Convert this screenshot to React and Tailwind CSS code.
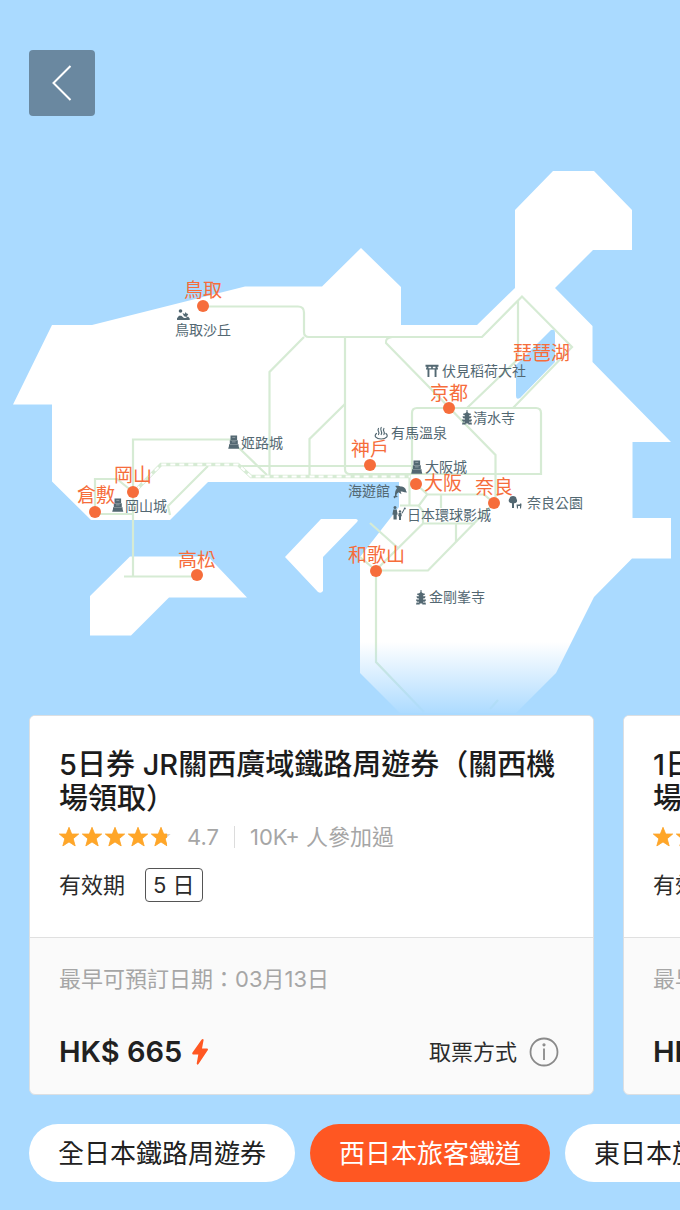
import React, { useState } from 'react'

const cities = [
    { name: '鳥取', x: 184, y: 297, dot: [203, 306] },
    { name: '琵琶湖', x: 513, y: 360 },
    { name: '京都', x: 430, y: 400, dot: [449, 408] },
    { name: '神戶', x: 351, y: 456, dot: [370, 465] },
    { name: '大阪', x: 424, y: 490, dot: [416, 484] },
    { name: '奈良', x: 475, y: 494, dot: [494, 503] },
    { name: '和歌山', x: 348, y: 562, dot: [376, 571] },
    { name: '岡山', x: 114, y: 482, dot: [133, 492] },
    { name: '倉敷', x: 77, y: 502, dot: [95, 512] },
    { name: '高松', x: 178, y: 567, dot: [197, 575] },
];

const sights = [
    { name: '鳥取沙丘', x: 175, y: 335, icon: 'dunes', at: [176, 308] },
    { name: '伏見稻荷大社', x: 442, y: 376, icon: 'torii', at: [425, 364] },
    { name: '清水寺', x: 473, y: 423, icon: 'pagoda', at: [460, 411] },
    { name: '有馬溫泉', x: 391, y: 438, icon: 'spring', at: [374, 426] },
    { name: '姬路城', x: 241, y: 448, icon: 'castle', at: [227, 435] },
    { name: '大阪城', x: 425, y: 472, icon: 'castle', at: [410, 460] },
    { name: '海遊館', x: 348, y: 496, icon: 'dolphin', at: [393, 484] },
    { name: '日本環球影城', x: 407, y: 520, icon: 'family', at: [392, 506] },
    { name: '奈良公園', x: 527, y: 508, icon: 'park', at: [508, 496] },
    { name: '岡山城', x: 125, y: 511, icon: 'castle', at: [111, 498] },
    { name: '金剛峯寺', x: 429, y: 602, icon: 'pagoda', at: [414, 591] },
];

const passes = [
    { title: '5日券 JR關西廣域鐵路周遊券（關西機場領取）', rating: '4.7', joined: '10K+ 人參加過', days: '5 日', date: '03月13日', price: 'HK$ 665' },
    { title: '1日券 JR關西廣域鐵路周遊券（關西機場領取）', rating: '4.7', joined: '10K+ 人參加過', days: '1 日', date: '03月13日', price: 'HK$ 165' },
];

const regions = ['全日本鐵路周遊券', '西日本旅客鐵道', '東日本旅客鐵道'];

// every glyph is drawn in a 14 x 14 box
function SightIcon({ kind }) {
    switch (kind) {
        case 'castle':
            return (
                <g>
                    <path d="M3.500 .5h6.600v4.400H3.500zM2.800 5.200h8v3.700h-8zM2 9.200h9.600v1.800l.7 2.800H1.200L2 11z" />
                    <path d="M5.300 2.400h3M5 6.900h3.600" stroke="#fff" strokeOpacity=".5" strokeWidth=".7" />
                </g>
            );
        case 'pagoda':
            return (
                <g>
                    <path d="M6.500-1h1v2.500h-1z" />
                    <path d="M7 .5C8 2 9.500 2.600 11 2.800 11 4 10 4.500 9 4.500H5C4 4.500 3 4 3 2.800 4.500 2.600 6 2 7 .5zM2.500 5.300h9C11.500 7 10.500 7.600 9.300 7.600H4.700C3.500 7.600 2.500 7 2.500 5.300zM2 8.400h10c0 1.700-1 2.300-2.200 2.300H4.200C3 10.700 2 10.100 2 8.400zM2.500 11.500h9l.5 2H8.300v-1H5.700v1H2z" />
                    <path d="M5 4h4v8H5z" />
                </g>
            );
        case 'torii':
            return <path d="M.5 .8h13v2h-1V4.200h.5v1.300h-1.500V13H9.600V5.500H4.400V13H2.500V5.500H1V4.200h.5V2.800h-1zM3.500 2.800v1.400h2.700V2.800zM7.800 2.800v1.400h2.700V2.800z" fillRule="evenodd" />;
        case 'spring':
            return (
                <g fill="none" stroke="currentColor" strokeWidth="1.200" strokeLinecap="round">
                    <path d="M4.500 2.500q-1 1.500 0 3t0 3M7.200 1.500q-1 1.700 0 3.500t0 3.500M9.900 2.500q-1 1.500 0 3t0 3" />
                    <path d="M2.500 7.500C-.5 9.800 2 13 7.200 13s7.700-3.200 4.700-5.500" />
                </g>
            );
        case 'dolphin':
            return <path d="M1.500 14.500 .3 12.800 2 11.500C1.800 8.800 2.300 6 4 4.200L2.200 2c2.300-.4 4.200-.2 5.600.6C11 2.500 13 5 13 6.800L14 8.500 11.500 8.300C10 7.600 8.800 7.300 7.600 7.500L8.500 10.200 5.600 8.300C4.200 9.200 3.400 10.300 3.400 11.800L5 13l-2.400.2z" />;
        case 'family':
            return (
                <g>
                    <circle cx="3" cy="1.500" r="1.500" />
                    <path d="M1.300 3.500h3.400l1 5-1 .3V13.500H1.500V8.800L.4 8.500z" />
                    <circle cx="8" cy="5.500" r="1.200" />
                    <path d="M6.700 7h2.600l.5 3-.8.500v3.500H7V10.500l-.8-.5zM9.500 7l2.300-4 .8.500-2.100 4z" />
                    <circle cx="12.800" cy="2.500" r="1" />
                </g>
            );
        case 'park':
            return (
                <g>
                    <path d="M5 0C7 0 8.500 1.200 8.500 3 10 5 8.500 7.500 6 7.200V12H4V7.200C1 7.200-.3 4.500 1.500 2.500 1.800.8 3.200 0 5 0z" />
                    <path d="M8.500 8.500h3l1.500-1.500.5 1.500-.5 4h-1v-2.500h-2V12.500h-1z" />
                </g>
            );
        default:
            return (
                <g>
                    <circle cx="4.500" cy="3" r="1.800" />
                    <path d="M1 12V10.300l2-2.600h2.300L8 10h1.500l2.500-1.500 1.700 2V12z" />
                    <path d="M6.500 5l2.200 1 1-2 .8 1.500 1.800.5-1.800 3-2.500-.7z" />
                </g>
            );
    }
}

function RailMap() {
    return (
        <svg viewBox="0 0 680 715" className="block w-full" role="img" aria-label="西日本">
            <defs>
                <linearGradient id="fade" x1="0" y1="0" x2="0" y2="1">
                    <stop offset="0" stopColor="#aadaff" stopOpacity="0" />
                    <stop offset="1" stopColor="#aadaff" />
                </linearGradient>
            </defs>

            {/* land */}
            <g fill="#fff">
                <path d="M52 325H92L245 286.500H322L361 248 401 287V325H477L515 288V210L553 171H594L632 210V250H593L555 288 592.500 326V362L671 442H632.500V518H671V558.500H632L594 597 556 673 516 713H400L360 673V557L399 507V482H208L170 520H91L52 481.500V404.500H13z" />
                <path d="M130 556.500H208L247 597.500H169L131 635.500H90V596z" />
                <path d="M321 519H356q3 1 1 3L323 557V591q-2 3-5 1L285 557z" />
            </g>

            {/* rail lines */}
            <g fill="none" stroke="#d6ebd4" strokeWidth="2.200">
                <path d="M203 306.500H298q6 0 6 6V332q0 5 5 5H482L522 296.500 572 347 513 408" />
                <path d="M304 337 269.500 372V475" />
                <path d="M345 337V469q0 5 5 5H541V413q0-5-5-5H417q-5 0-5 5V475" />
                <path d="M345 404 309.500 439V475" />
                <path d="M392 337q-7 1-6 6L495.500 455V503" />
                <path d="M518 301V359L467 408" />
                <path d="M233 439.500H133V576M124 576.500H197M239 448 267 475" />
                <path d="M95 512V479H117L133 492M95 514H133" />
                <path d="M240 466H412M208 466 168 506 170 515" />
                <path d="M409.500 475V505M400 505.500H419L427 494.500H484L494 503M416 484 427 494M441 494.500V508" />
                <path d="M418 505 423 511V523.500H475M423 523.500 376 570M370 523 398 548M456 523V542" />
                <path d="M360 557 376 570.500H428L494 503" />
                <path d="M376 570V662L424 712M490 709 498 700" />
            </g>

            {/* bullet train track */}
            <path d="M136 490 161 464.500H238L251 476.500H410" fill="none" stroke="#d6ebd4" strokeWidth="3.600" />
            <path d="M136 490 161 464.500H238L251 476.500H410" fill="none" stroke="#fff" strokeWidth="2.200" strokeDasharray="5 4" />

            <path d="M551 330q4-1 4 3V362L520 398q-4 2-4-2V365z" fill="#aadaff" />
            <rect y="642" width="680" height="74" fill="url(#fade)" />

            {sights.map((s) => (
                <g key={s.name} className="fill-[#536872] text-[#536872]">
                    <g transform={`translate(${s.at[0]} ${s.at[1]})`}>
                        <SightIcon kind={s.icon} />
                    </g>
                    <text x={s.x} y={s.y} className="text-[14px]">{s.name}</text>
                </g>
            ))}
            {cities.map((c) => (
                <g key={c.name} className="fill-[#f66d3b]">
                    {c.dot && <circle cx={c.dot[0]} cy={c.dot[1]} r="6" />}
                    <text x={c.x} y={c.y} className="text-[19px]">{c.name}</text>
                </g>
            ))}
        </svg>
    )
}

function Stars() {
    const star = 'M10 .3 12.700 7H19.700L14.200 11.700 16.200 19 10 14.900 3.800 19 5.800 11.700 .3 7H7.300z';
    return (
        <div className="flex gap-[3px]">
            {[1, 1, 1, 1, 0.8].map((fill, i) => (
                <svg key={i} viewBox="0 0 20 20" className="size-5" strokeLinejoin="round">
                    <path d={star} fill="#d4d4d4" />
                    <path d={star} fill="#ffa628" stroke="#ffa628" strokeWidth=".8" style={{ clipPath: `inset(0 ${(1 - fill) * 100}% 0 0)` }} />
                </svg>
            ))}
        </div>
    )
}

function PassCard({ pass }) {
    return (
        <article className="w-[calc(100vw-115px)] shrink-0 overflow-hidden rounded-md border border-[#dcdfe2] bg-[#fafafa]">
            <div className="border-b border-[#e0e0e0] bg-white px-[29px] pt-8 pb-[35px]">
                <h2 className="text-[29px] leading-[34px] font-medium text-[#1c1c1c]">{pass.title}</h2>
                <div className="mt-[5px] flex h-8 items-center text-[22px] text-[#a6a6a6]">
                    <Stars />
                    <span className="ml-4">{pass.rating}</span>
                    <span className="mx-[15px] h-[22px] w-px bg-[#dcdcdc]" />
                    <span>{pass.joined}</span>
                </div>
                <div className="mt-[15px] flex items-center gap-5 text-[22px] text-[#2b2b2b]">
                    <span>有效期</span>
                    <span className="flex h-[34px] items-center rounded-sm border border-[#555] px-[7px]">{pass.days}</span>
                </div>
            </div>
            <div className="px-[29px] pt-6 pb-[25px]">
                <p className="text-[22px] leading-[34px] text-[#a6a6a6]">最早可預訂日期：{pass.date}</p>
                <div className="mt-[39px] flex h-[34px] items-center justify-between">
                    <p className="flex items-center gap-[10px] text-[29px] font-semibold text-[#212121]">
                        {pass.price}
                        <svg viewBox="0 0 16 26" className="h-[26px] w-4" fill="#ff5722">
                            <path d="M10.500 0Q12 .2 11.500 1.500L10 9.500h5q1.500.3.700 1.800L6.500 25Q5 26.500 4.700 24.500L6.300 15.500H1.200Q-.3 15 .5 13.500L9.500.7z" />
                        </svg>
                    </p>
                    <button className="flex items-center gap-3 pr-[5px] text-[22px] text-[#2b2b2b]">
                        取票方式
                        <svg viewBox="0 0 30 30" className="size-[30px]" fill="none" stroke="#8a8a8a" strokeWidth="1.800">
                            <circle cx="15" cy="15" r="13.500" />
                            <path d="M15 11.500V23" />
                            <circle cx="15" cy="7.800" r=".7" />
                        </svg>
                    </button>
                </div>
            </div>
        </article>
    )
}

function App() {
    const [region, setRegion] = useState(regions[1]);

    return (
        <div className="min-h-screen overflow-hidden bg-[#aadaff] pb-7 font-[Inter,'Noto_Sans_CJK_TC',sans-serif]">
            <main className="relative">
                <button aria-label="返回" className="absolute top-[50px] left-[29px] flex size-[66px] items-center justify-center rounded-sm bg-[#6a88a0]">
                    <svg viewBox="0 0 20 36" className="h-9 w-5" fill="none" stroke="#fff" strokeWidth="2">
                        <path d="M18.500 1 1.500 18 18.500 35" />
                    </svg>
                </button>
                <RailMap />
            </main>

            <section className="flex gap-[29px] overflow-hidden pl-[29px]">
                {passes.map((pass) => <PassCard key={pass.title} pass={pass} />)}
            </section>

            <nav className="mt-[29px] flex gap-[15px] overflow-hidden pl-[29px]">
                {regions.map((name) => (
                    <button
                        key={name}
                        onClick={() => setRegion(name)}
                        className={`h-[58px] shrink-0 rounded-full px-[29px] text-[26px] ${name === region ? 'bg-[#ff5722] text-white' : 'bg-white text-[#212121]'}`}
                    >
                        {name}
                    </button>
                ))}
            </nav>
        </div>
    )
}

export default App
